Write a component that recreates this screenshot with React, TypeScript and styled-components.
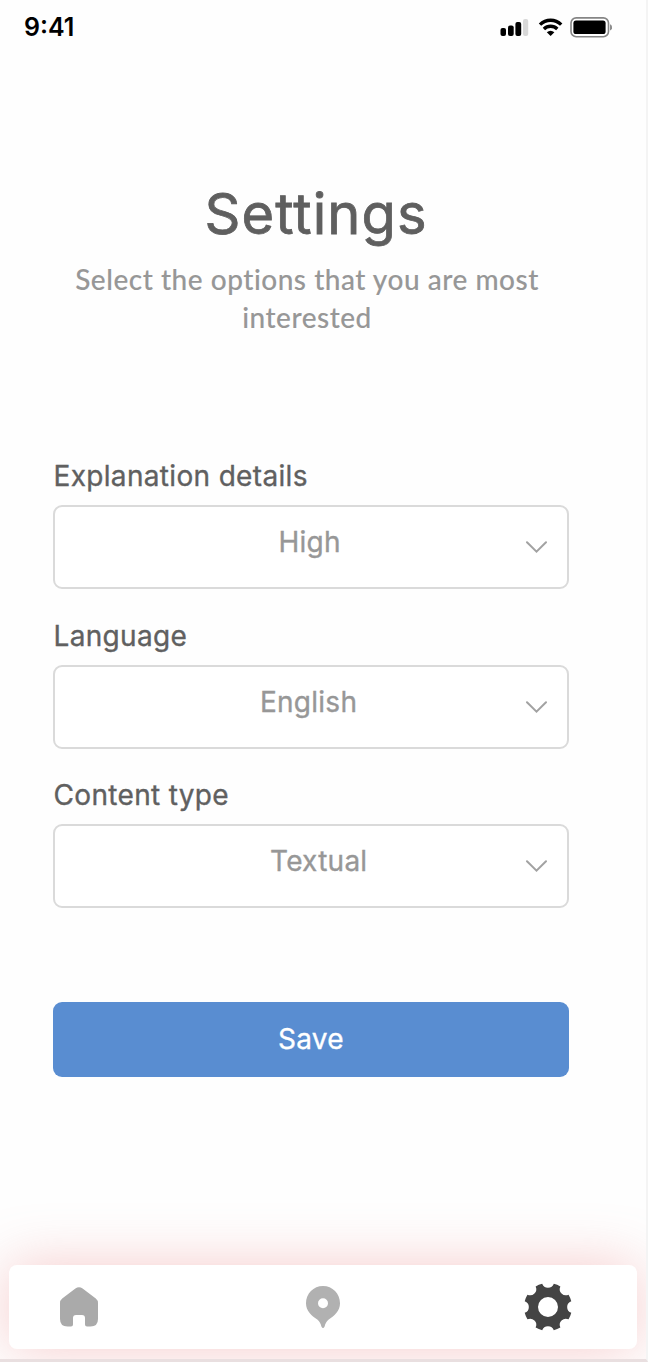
import React from "react";
import styled, { createGlobalStyle } from "styled-components";

const GlobalStyle = createGlobalStyle`
  * { box-sizing: border-box; }
  body { margin: 0; background: #fefefe; }
`;

const Screen = styled.main`
  display: flex;
  flex-direction: column;
  width: 648px;
  height: 1362px;
  overflow: hidden;
  background: #fefefe;
  border-right: 2px solid #f4f4f4;
  border-bottom: 3px solid #e9dfe0;
  font-family: Inter, "Liberation Sans", sans-serif;
`;

const StatusBar = styled.header`
  display: flex;
  justify-content: space-between;
  align-items: center;
  flex: none;
  height: 54px;
  padding: 0 34px 0 24px;
`;

const Clock = styled.time`
  font-size: 25px;
  line-height: 30px;
  font-weight: 600;
  letter-spacing: 0;
  color: #000;
`;

const StatusIcons = styled.div`
  display: flex;
  align-items: center;
  svg { display: block; }
`;

const Intro = styled.section`
  flex: none;
  height: 408px;
  padding-top: 126px;
  text-align: center;
`;

const Title = styled.h1`
  margin: 0 14px 0 0;
  font-size: 56px;
  line-height: 68px;
  font-weight: 400;
  letter-spacing: 1.1px;
  color: #5f5f5f;
  -webkit-text-stroke: 0.8px #5f5f5f;
`;

const Subtitle = styled.p`
  width: 500px;
  margin: 12px 0 0 57px;
  font-family: Lato, "Open Sans", sans-serif;
  font-size: 28px;
  line-height: 38px;
  font-weight: 500;
  letter-spacing: 0.52px;
  color: #979797;
  -webkit-text-stroke: 0.1px #979797;
`;

const Form = styled.form`
  display: flex;
  flex-direction: column;
  flex: none;
  width: 516px;
  margin-left: 53px;
`;

const Field = styled.div`
  height: 159.5px;
`;

const Label = styled.label`
  display: block;
  height: 43px;
  padding-left: 0.5px;
  font-size: 28px;
  line-height: 29px;
  font-weight: 400;
  letter-spacing: 0.33px;
  white-space: nowrap;
  color: #606060;
  -webkit-text-stroke: 0.35px #606060;
`;

const Select = styled.button.attrs({ type: "button" })`
  display: grid;
  grid-template-columns: 1fr 22px;
  width: 516px;
  height: 84px;
  padding: 0 20px 0 0;
  border: 2px solid #dadada;
  border-radius: 9px;
  background: #fff;
  font: inherit;
  color: #979797;
`;

const Value = styled.span<{ $start: number }>`
  padding: 18px 0 0 ${(p) => p.$start}px;
  align-self: start;
  font-size: 28px;
  line-height: 34px;
  font-weight: 400;
  letter-spacing: 0.25px;
  text-align: left;
  white-space: nowrap;
  -webkit-text-stroke: 0.35px #979797;
`;

const Chevron = styled.svg`
  display: block;
  align-self: start;
  margin-top: 33px;
`;

const SaveButton = styled.button.attrs({ type: "button" })`
  width: 516px;
  height: 75px;
  margin-top: 61.5px;
  padding: 0 0 2px;
  border: 0;
  border-radius: 9px;
  background: #598dd1;
  font-family: inherit;
  font-size: 28px;
  font-weight: 400;
  letter-spacing: 0.25px;
  color: #fff;
  -webkit-text-stroke: 0.35px #fff;
`;

const NavBar = styled.nav`
  display: grid;
  grid-template-columns: 246px 218px 48px;
  align-items: center;
  flex: none;
  width: 628px;
  height: 84px;
  margin: auto 0 10px 9px;
  padding-left: 51px;
  border-radius: 8px;
  background: #fff;
  box-shadow: 0 0 56px rgba(236, 130, 130, 0.41);
  svg { display: block; }
`;

/* Eight teeth separated by round notches, centred on the origin. */
const gearPath = (() => {
  const point = (degrees: number) => {
    const a = (degrees * Math.PI) / 180;
    return `${(24 * Math.cos(a)).toFixed(2)} ${(24 * Math.sin(a)).toFixed(2)}`;
  };
  let d = `M${point(-14)}`;
  for (let i = 0; i < 8; i++) {
    d += `A6.15 6.15 0 0 0 ${point(i * 45 + 14)}A24 24 0 0 1 ${point(i * 45 + 31)}`;
  }
  return `${d}ZM10 0A10 10 0 1 0 -10 0A10 10 0 1 0 10 0Z`;
})();

const StatusGlyphs = () => (
  <svg width="112" height="22" viewBox="500 16 112 22">
    <rect x="500.5" y="28" width="5.5" height="8" rx="2" />
    <rect x="508" y="25.5" width="5.7" height="10.5" rx="2" />
    <rect x="515.4" y="22" width="5.8" height="14" rx="2" />
    <rect x="523" y="19" width="5.2" height="17" rx="2" fill="#d8d8d8" />
    <g fill="none" stroke="#000" strokeWidth="3.4">
      <path d="M540 24.6a15.2 15.2 0 0 1 21.2 0" />
      <path d="M543.9 29a9.7 9.7 0 0 1 13.4 0" />
    </g>
    <path d="M546.8 32.3q3.8-3.2 7.6 0L550.6 36Z" />
    <rect x="571" y="17.9" width="37.5" height="18.8" rx="5.2" fill="#fff" stroke="#858585" strokeWidth="1.6" />
    <rect x="573.4" y="20.6" width="32.2" height="13.5" rx="2.6" />
    <path d="M610 24.2q2.2 1 2.2 3.2t-2.2 3.2z" fill="#8d8d8d" />
  </svg>
);

const fields = [
  { label: "Explanation details", value: "High", start: 223.5 },
  { label: "Language", value: "English", start: 205 },
  { label: "Content type", value: "Textual", start: 215 },
];

export default function App() {
  return (
    <>
      <GlobalStyle />
      <Screen>
        <StatusBar>
          <Clock>9:41</Clock>
          <StatusIcons>
            <StatusGlyphs />
          </StatusIcons>
        </StatusBar>
        <Intro>
          <Title>Settings</Title>
          <Subtitle>
            Select the options that you are most
            <br />
            interested
          </Subtitle>
        </Intro>
        <Form>
          {fields.map((f) => (
            <Field key={f.label}>
              <Label>{f.label}</Label>
              <Select>
                <Value $start={f.start}>{f.value}</Value>
                <Chevron width="22" height="14" viewBox="0 0 22 14" fill="none" stroke="#a2a2a2" strokeWidth="2" strokeLinecap="round">
                  <path d="M2 2.2 11.5 11.7 21 2.2" />
                </Chevron>
              </Select>
            </Field>
          ))}
          <SaveButton>Save</SaveButton>
        </Form>
        <NavBar>
          <svg width="38" height="40" viewBox="0 0 38 40" fill="#aaaaaa">
            <path d="M2.2 11.5 15.4 1.5Q19-1.1 22.6 1.5L35.8 11.5Q38 13.3 38 16V32Q38 39.5 30.5 39.5H27Q25 39.5 25 37.5V31Q25 28 22 28H16Q13 28 13 31V37.5Q13 39.5 11 39.5H7.5Q0 39.5 0 32V16Q0 13.3 2.2 11.5Z" />
          </svg>
          <svg width="36" height="44" viewBox="0 0 36 44" fill="#b1b1b1">
            <path fillRule="evenodd" d="M17 1C7.5 1 0 8.5 0 18.2C0 25.8 5.5 30.7 11.3 34.5C13.6 36.5 14.8 38.7 15.4 41.4Q17 44.5 18.6 41.4C19.2 38.7 20.4 36.5 22.7 34.5C28.5 30.7 34 25.8 34 18.2C34 8.5 26.5 1 17 1ZM17 13.2a5 5 0 1 1 0 10a5 5 0 1 1 0-10Z" />
          </svg>
          <svg width="48" height="48" viewBox="-24 -24 48 48" fill="#444444">
            <path fillRule="evenodd" d={gearPath} />
          </svg>
        </NavBar>
      </Screen>
    </>
  );
}
